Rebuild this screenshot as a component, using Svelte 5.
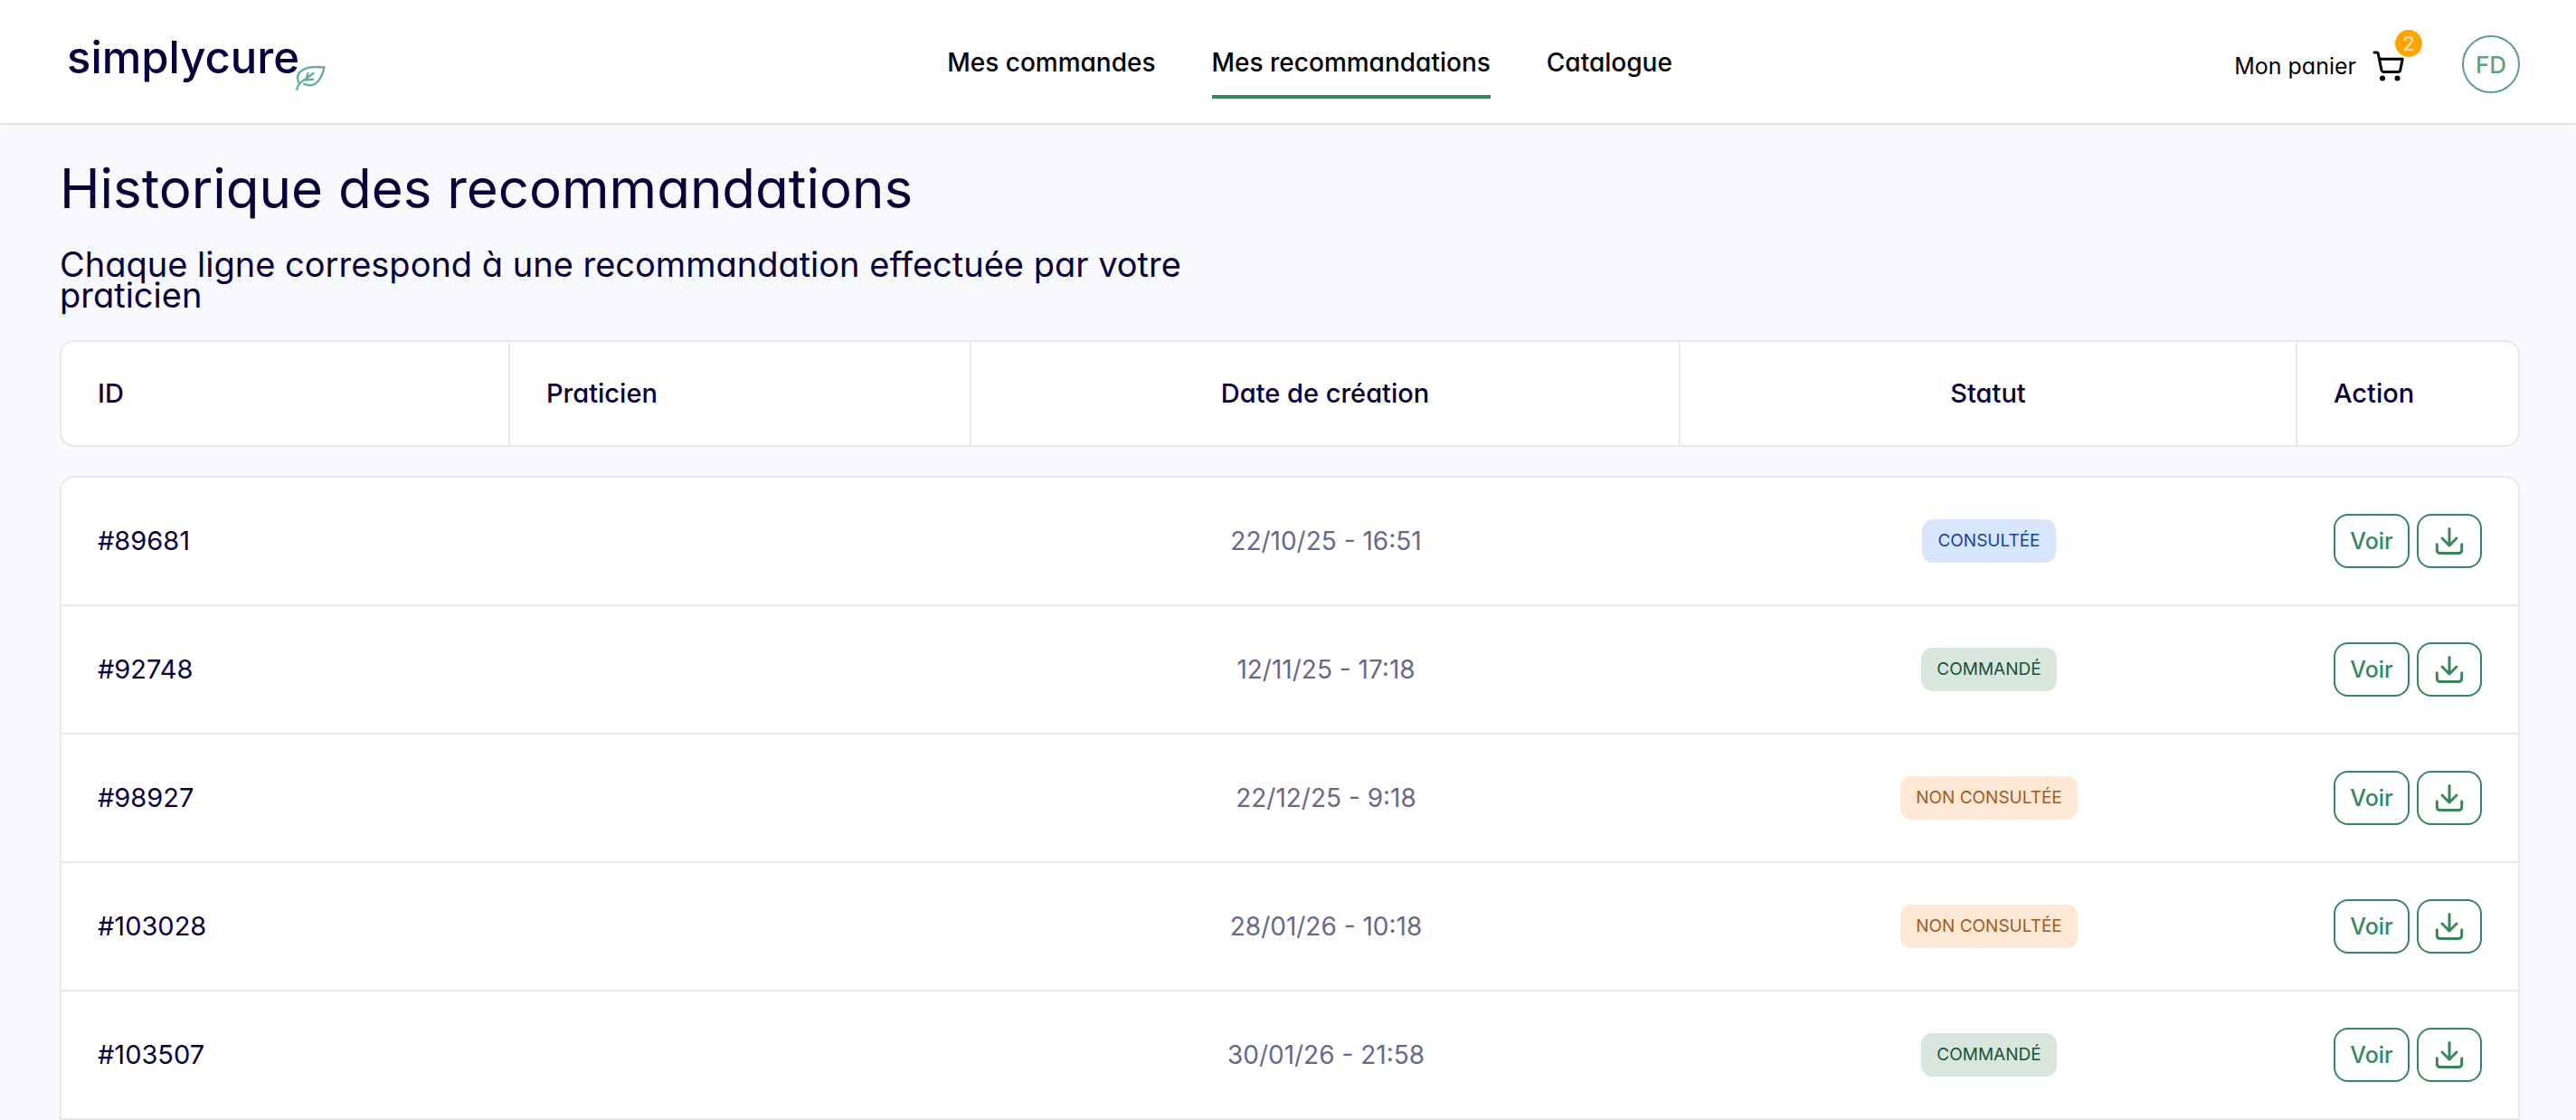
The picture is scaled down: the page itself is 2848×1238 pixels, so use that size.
<script lang="ts">
  type Status = 'seen' | 'ordered' | 'unseen';

  const labels: Record<Status, string> = {
    seen: 'CONSULTÉE',
    ordered: 'COMMANDÉ',
    unseen: 'NON CONSULTÉE',
  };

  const nav = [
    { label: 'Mes commandes', active: false },
    { label: 'Mes recommandations', active: true },
    { label: 'Catalogue', active: false },
  ];

  const rows: { id: string; date: string; status: Status }[] = [
    { id: '#89681', date: '22/10/25 - 16:51', status: 'seen' },
    { id: '#92748', date: '12/11/25 - 17:18', status: 'ordered' },
    { id: '#98927', date: '22/12/25 - 9:18', status: 'unseen' },
    { id: '#103028', date: '28/01/26 - 10:18', status: 'unseen' },
    { id: '#103507', date: '30/01/26 - 21:58', status: 'ordered' },
  ];
</script>

<header class="topbar">
  <a class="logo" href="#accueil">
    <span>simplycure</span>
    <svg class="leaf" viewBox="0 0 34 28" aria-hidden="true">
      <path d="M4 19C0 8 9 0 32.500 2.500C30 14 23 27 10 20.700" />
      <path d="M2.300 27C3 21 6 18.500 11 16L20.500 9M10 16.500L20 15.700M12.700 14.700L14.500 9" />
    </svg>
  </a>

  <nav class="menu" aria-label="Navigation principale">
    {#each nav as item}
      <a href="#menu" class:active={item.active} aria-current={item.active ? 'page' : undefined}>{item.label}</a>
    {/each}
  </nav>

  <div class="account">
    <a class="cart" href="#panier">
      <span>Mon panier</span>
      <span class="cart-icon">
        <svg viewBox="0 0 36 38" aria-hidden="true">
          <path d="M2 4H4.500Q6 4 6.300 5.500L10 23.500Q10.500 25.500 12.500 25.500H28.500Q30.300 25.500 30.700 23.500L33.200 11.200H7.500" />
          <circle cx="11" cy="32.600" r="3" />
          <circle cx="27.500" cy="32.600" r="3" />
        </svg>
        <span class="count">2</span>
      </span>
    </a>
    <button class="avatar" type="button" aria-label="Compte FD">FD</button>
  </div>
</header>

<main>
  <h1>Historique des recommandations</h1>
  <p class="intro">Chaque ligne correspond à une recommandation effectuée par votre praticien</p>

  <table>
    <thead>
      <tr>
        <th scope="col">ID</th>
        <th scope="col">Praticien</th>
        <th scope="col" class="center">Date de création</th>
        <th scope="col" class="center">Statut</th>
        <th scope="col">Action</th>
      </tr>
    </thead>
    <tbody>
      {#each rows as row}
        <tr>
          <td>{row.id}</td>
          <td></td>
          <td class="center date">{row.date}</td>
          <td class="center"><span class="badge {row.status}">{labels[row.status]}</span></td>
          <td class="actions">
            <button class="action" type="button">Voir</button>
            <button class="action icon" type="button" aria-label="Télécharger {row.id}">
              <svg viewBox="0 0 32 32" aria-hidden="true">
                <path d="M16 2.500V20.500M8 13L16 21L24 13M2.300 19.700V26Q2.300 29.600 6 29.600H26Q29.700 29.600 29.700 26V19.700" />
              </svg>
            </button>
          </td>
        </tr>
      {/each}
    </tbody>
  </table>
</main>

<style>
  :global(body) {
    margin: 0;
    background: #f8f9fd;
    color: #08003b;
    font-family: Inter, 'Open Sans', sans-serif;
    font-feature-settings: 'cv11';
  }

  a {
    color: inherit;
    text-decoration: none;
  }

  button {
    box-sizing: border-box;
    padding: 0;
    border: 2px solid #38875b;
    background: #fff;
    color: #38875b;
    font: inherit;
    font-feature-settings: inherit;
    cursor: pointer;
  }

  svg {
    display: block;
    fill: none;
    stroke: currentColor;
    stroke-width: 3;
    stroke-linecap: round;
    stroke-linejoin: round;
  }

  .topbar {
    display: grid;
    grid-template-columns: 1fr auto 1fr;
    box-sizing: border-box;
    height: 136px;
    padding: 0 62px 0 74px;
    background: #fff;
    box-shadow: 0 1px 3px rgba(0, 0, 0, 0.16);
  }

  .logo {
    position: relative;
    justify-self: start;
    padding-top: 34px;
    font-size: 49px;
    font-weight: 500;
    line-height: 60px;
  }

  .leaf {
    position: absolute;
    top: 72px;
    left: 252px;
    width: 34px;
    height: 28px;
    color: #64b195;
    stroke-width: 2.4;
  }

  .menu {
    display: flex;
    align-items: start;
    gap: 62px;
    padding-left: 36px;
    color: #000;
    font-size: 28px;
    font-weight: 500;
    line-height: 40px;
  }

  .menu a {
    padding: 49px 0 16px;
    border-bottom: 4px solid transparent;
  }

  .menu a.active {
    border-color: #38875b;
  }

  .account {
    display: flex;
    justify-content: end;
    align-items: center;
    gap: 63px;
    padding-top: 6px;
  }

  .cart {
    display: flex;
    align-items: center;
    gap: 18px;
    padding-top: 4px;
    color: #000;
    font-size: 25px;
    line-height: 36px;
  }

  .cart-icon {
    position: relative;
  }

  .cart-icon svg {
    width: 36px;
    height: 38px;
  }

  .cart-icon circle {
    fill: currentColor;
    stroke: none;
  }

  .count {
    position: absolute;
    top: -21px;
    right: -19px;
    width: 30px;
    height: 30px;
    border-radius: 50%;
    background: #ffa502;
    color: #fbe5c0;
    font-size: 22px;
    line-height: 30px;
    text-align: center;
  }

  .avatar {
    width: 64px;
    height: 64px;
    border-color: #5f9f7f;
    border-radius: 50%;
    color: #5f9f7f;
    font-size: 26px;
    font-weight: 500;
  }

  main {
    padding: 34px 62px 0 66px;
  }

  h1 {
    margin: 0;
    font-size: 60px;
    font-weight: 400;
    line-height: 76px;
  }

  .intro {
    max-width: 1340px;
    margin: 29px 0 33px;
    font-size: 38px;
    line-height: 34px;
  }

  table,
  thead,
  tbody {
    display: block;
  }

  tr {
    display: grid;
    grid-template-columns: 496fr 510fr 784fr 682fr 244fr;
  }

  thead,
  tbody {
    overflow: hidden;
    border: 2px solid #e8e9ee;
    border-radius: 16px;
    background: #fff;
  }

  thead {
    margin-bottom: 32px;
  }

  tbody {
    border-bottom: 0;
    border-radius: 16px 16px 0 0;
  }

  th,
  td {
    display: flex;
    align-items: center;
    box-sizing: border-box;
    padding: 0 40px;
    font-size: 29px;
    font-weight: 400;
    line-height: 42px;
    text-align: left;
  }

  th {
    height: 114px;
    border-right: 2px solid #e8e9ee;
    font-weight: 500;
  }

  th:last-child {
    border-right: 0;
  }

  td {
    height: 142px;
    border-bottom: 2px solid #e8e9ee;
  }

  .center {
    justify-content: center;
  }

  .date {
    color: #6b668b;
    font-size: 28px;
  }

  .badge {
    padding: 0 17px;
    border-radius: 12px;
    font-size: 19px;
    line-height: 48px;
  }

  .seen {
    background: #d7e5fd;
    color: #0f459b;
  }

  .ordered {
    background: #d8e6dd;
    color: #20503a;
  }

  .unseen {
    background: #fde8d6;
    color: #a05a25;
  }

  .actions {
    gap: 8px;
    padding-right: 0;
  }

  .action {
    width: 84px;
    height: 60px;
    border-radius: 16px;
    font-size: 25px;
    font-weight: 500;
  }

  .action.icon {
    display: grid;
    place-items: center;
    width: 72px;
  }

  .action svg {
    width: 32px;
    height: 32px;
  }
</style>
